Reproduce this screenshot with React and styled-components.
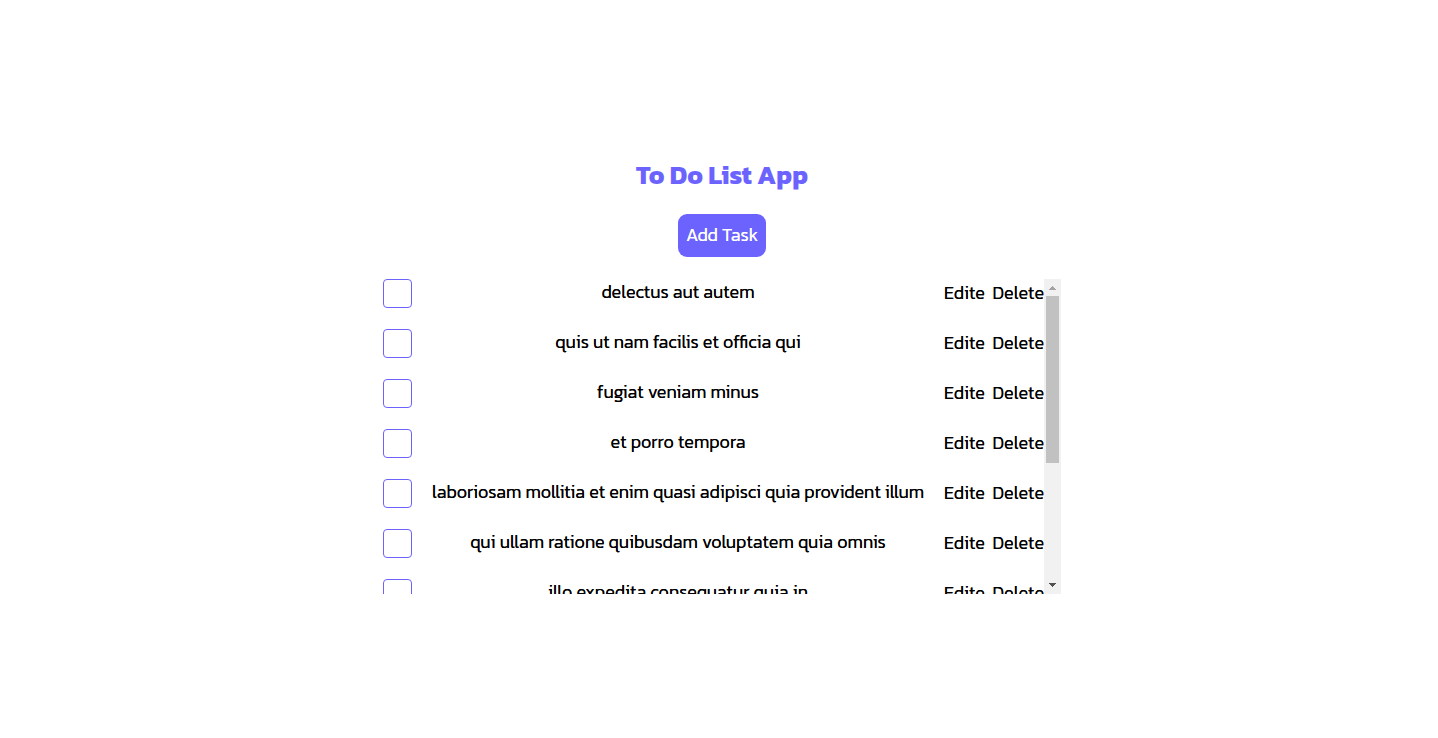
import React, { useRef, useState } from "react";
import styled, { createGlobalStyle } from "styled-components";

const accent = "#6c63ff";

const GlobalStyle = createGlobalStyle`
  *, *::before, *::after { box-sizing: border-box; }
  body {
    margin: 0;
    background: #fff;
    color: #000;
    font-family: Kanit, "Noto Sans", sans-serif;
    font-size: 18px;
    font-weight: 300;
    line-height: 27px;
  }
`;

const Page = styled.main`
  display: flex;
  flex-direction: column;
  align-items: center;
  padding: 157px 10px 40px 16px;
`;

const Title = styled.h1`
  margin: 0 0 21px;
  color: ${accent};
  font-size: 26px;
  font-weight: 700;
  line-height: 36px;
`;

const AddButton = styled.button`
  height: 43px;
  margin-bottom: 22px;
  padding: 0 8px 2px;
  border: 0;
  border-radius: 9px;
  background: ${accent};
  color: #fff;
  font: inherit;
  text-shadow: 0 0 0 currentColor;
  cursor: pointer;
`;

const ScrollArea = styled.section`
  display: flex;
  width: 100%;
  max-width: 678px;
  height: 315px;
`;

const TaskList = styled.ul`
  display: flex;
  flex: 1;
  flex-direction: column;
  gap: 21px;
  min-width: 0;
  margin: 0;
  padding: 0;
  overflow-y: scroll;
  list-style: none;
  text-shadow: 0 0 0 currentColor;
  scrollbar-width: none;
`;

const ScrollBar = styled.div`
  display: flex;
  flex: none;
  flex-direction: column;
  width: 17px;
  background: #f1f1f1;
`;

const ScrollButton = styled.button`
  flex: none;
  height: 17px;
  padding: 0;
  border: 0;
  background: none;
  color: ${(p) => (p.$muted ? "#a3a3a3" : "#505050")};

  svg { display: block; }
`;

const Track = styled.div`
  flex: 1;
  padding: 0 2px;
`;

const Thumb = styled.div`
  background: #c1c1c1;
`;

const Task = styled.li`
  display: flex;
  flex-shrink: 0;
  align-items: flex-start;
  min-height: 29px;
`;

const Check = styled.input`
  flex: none;
  width: 29px;
  height: 29px;
  margin: 0;
  border: 1px solid ${accent};
  border-radius: 4px;
  appearance: none;
  cursor: pointer;

  &:checked { background: ${accent}; }
`;

const TaskLabel = styled.label`
  flex: 1;
  padding: 0 16px;
  line-height: 25px;
  text-align: center;
`;

const Actions = styled.div`
  display: flex;
  flex: none;
  justify-content: space-between;
  width: 100px;
`;

const TextButton = styled.button`
  padding: 0;
  border: 0;
  background: none;
  color: inherit;
  font: inherit;
  text-shadow: inherit;
  cursor: pointer;
`;

const tasks = [
  "delectus aut autem",
  "quis ut nam facilis et officia qui",
  "fugiat veniam minus",
  "et porro tempora",
  "laboriosam mollitia et enim quasi adipisci quia provident illum",
  "qui ullam ratione quibusdam voluptatem quia omnis",
  "illo expedita consequatur quia in",
  "quo adipisci enim quam ut ab",
  "molestiae perspiciatis ipsa",
  "illo est ratione doloremque quia maiores aut",
  "vero rerum temporibus dolor",
];

export default function App() {
  const [done, setDone] = useState({});
  const [scroll, setScroll] = useState({ top: 0, size: 59.4 });
  const list = useRef(null);

  const onScroll = (e) => {
    const { scrollTop, clientHeight, scrollHeight } = e.currentTarget;
    setScroll({
      top: (scrollTop / scrollHeight) * 281,
      size: (clientHeight / scrollHeight) * 100,
    });
  };
  const move = (by) => list.current.scrollBy({ top: by });

  return (
    <>
      <GlobalStyle />
      <Page>
        <Title>To Do List App</Title>
        <AddButton type="button">Add Task</AddButton>
        <ScrollArea>
          <TaskList ref={list} onScroll={onScroll}>
            {tasks.map((title, i) => (
              <Task key={title}>
                <Check
                  type="checkbox"
                  id={`task-${i}`}
                  checked={!!done[i]}
                  onChange={(e) => setDone({ ...done, [i]: e.target.checked })}
                />
                <TaskLabel htmlFor={`task-${i}`}>{title}</TaskLabel>
                <Actions>
                  <TextButton type="button">Edite</TextButton>
                  <TextButton type="button">Delete</TextButton>
                </Actions>
              </Task>
            ))}
          </TaskList>
          <ScrollBar>
            <ScrollButton
              type="button"
              aria-label="Scroll up"
              $muted={scroll.top === 0}
              onClick={() => move(-50)}
            >
              <svg width="17" height="17" shapeRendering="crispEdges" fill="currentColor">
                <path d="M8 7h1v1h1v1h1v1h1v1H5v-1h1V9h1V8h1z" />
              </svg>
            </ScrollButton>
            <Track>
              <Thumb style={{ height: `${scroll.size}%`, marginTop: scroll.top }} />
            </Track>
            <ScrollButton type="button" aria-label="Scroll down" onClick={() => move(50)}>
              <svg width="17" height="17" shapeRendering="crispEdges" fill="currentColor">
                <path d="M5 6h7v1h-1v1h-1v1H9v1H8V9H7V8H6V7H5z" />
              </svg>
            </ScrollButton>
          </ScrollBar>
        </ScrollArea>
      </Page>
    </>
  );
}
